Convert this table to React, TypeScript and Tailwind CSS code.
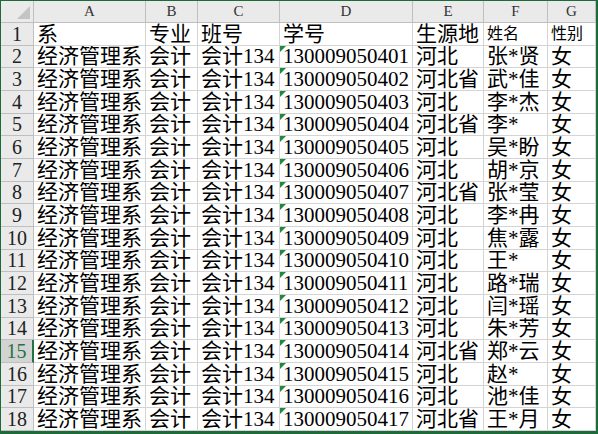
import React from "react";

const cols = ["A", "B", "C", "D", "E", "F", "G"];

const prov = ["河北", "河北省", "河北", "河北省", "河北", "河北", "河北省", "河北", "河北", "河北", "河北", "河北", "河北", "河北省", "河北", "河北", "河北省"];
const names = ["张*贤", "武*佳", "李*杰", "李*", "吴*盼", "胡*京", "张*莹", "李*冉", "焦*露", "王*", "路*瑞", "闫*瑶", "朱*芳", "郑*云", "赵*", "池*佳", "王*月"];

const rows = prov.map((p, i) => ({
  dept: "经济管理系",
  major: "会计",
  cls: "会计134",
  id: String(130009050401 + i),
  prov: p,
  name: names[i],
  sex: "女",
}));

const font = { fontFamily: '"Liberation Serif", "Noto Sans CJK SC", serif' };

function Cell({ children, small, tri }: { children?: React.ReactNode; small?: boolean; tri?: boolean }) {
  return (
    <div className="relative min-h-0 h-full border-r border-b border-[#d4d4d4] pl-[3px] flex items-end overflow-hidden whitespace-nowrap">
      {tri && (
        <span className="absolute left-0 top-0 w-0 h-0 border-t-[6px] border-r-[6px] border-t-[#1e8a3c] border-r-transparent" />
      )}
      <span className={small ? "text-[16px] leading-[20px] pb-[1px]" : "text-[21px] leading-[22px]"}>{children}</span>
    </div>
  );
}

function RowHead({ n, active }: { n: number; active?: boolean }) {
  return (
    <div
      className={
        "min-h-0 h-full flex items-center justify-center text-[20px] leading-none border-b border-[#bfbfbf] " +
        (active
          ? "bg-[#d3d3d3] text-[#217346] border-r-2 border-r-[#217346]"
          : "bg-[#eaeaea] text-[#222] border-r border-r-[#bfbfbf]")
      }
    >
      {n}
    </div>
  );
}

export default function App() {
  return (
    <div className="w-[598px] h-[434px] bg-[#1e6b3a] pt-[1px] pl-[1px] pr-[2px] pb-[3px] text-black overflow-hidden" style={font}>
      <div className="bg-white w-full h-full grid grid-cols-[33px_112px_52px_82px_133px_71px_64px_48px] grid-rows-[22px_repeat(18,22.67px)] overflow-hidden">
        <div className="relative bg-[#eaeaea] border-r border-b border-[#bfbfbf]">
          <span className="absolute right-[3px] bottom-[3px] w-0 h-0 border-b-[13px] border-l-[13px] border-b-[#c4c4c4] border-l-transparent" />
        </div>
        {cols.map((c) => (
          <div key={c} className="bg-[#eaeaea] border-r border-b border-[#bfbfbf] flex items-center justify-center text-[15px] leading-none text-[#333]">
            {c}
          </div>
        ))}

        <RowHead n={1} />
        <Cell>系</Cell>
        <Cell>专业</Cell>
        <Cell>班号</Cell>
        <Cell>学号</Cell>
        <Cell>生源地</Cell>
        <Cell small>姓名</Cell>
        <Cell small>性别</Cell>

        {rows.map((r, i) => (
          <React.Fragment key={r.id}>
            <RowHead n={i + 2} active={i + 2 === 15} />
            <Cell>{r.dept}</Cell>
            <Cell>{r.major}</Cell>
            <Cell>{r.cls}</Cell>
            <Cell tri>{r.id}</Cell>
            <Cell>{r.prov}</Cell>
            <Cell>{r.name}</Cell>
            <Cell>{r.sex}</Cell>
          </React.Fragment>
        ))}
      </div>
    </div>
  );
}
